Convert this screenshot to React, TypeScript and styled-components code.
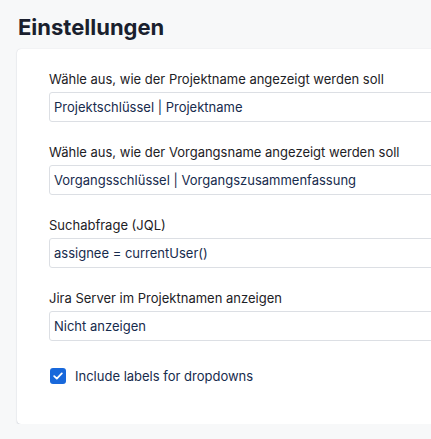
import React from "react";
import styled, { createGlobalStyle } from "styled-components";

const GlobalStyle = createGlobalStyle`
  html, body {
    margin: 0;
    padding: 0;
    background: #f7f8f9;
    overflow: hidden;
  }
  body {
    font-family: Inter, "Noto Sans", sans-serif;
    color: #1d2125;
  }
`;

const Page = styled.div`
  width: 480px;
  padding: 14px 0 0 18px;
  box-sizing: border-box;
`;

const Title = styled.h1`
  margin: 0 0 8px 0;
  font-size: 22px;
  line-height: 27px;
  font-weight: 700;
  color: #1a1f2e;
`;

const Card = styled.div`
  margin-left: -1px;
  background: #ffffff;
  border-radius: 4px;
  box-shadow: 0 1px 2px rgba(9, 30, 66, 0.12), 0 0 1px rgba(9, 30, 66, 0.18);
  padding: 22px 24px 40px 32px;
  display: flex;
  flex-direction: column;
`;

const Field = styled.div`
  display: flex;
  flex-direction: column;
  gap: 5px;
  margin-bottom: 22px;
`;

const Label = styled.label`
  font-size: 13px;
  line-height: 16px;
  color: #1d2125;
`;

const Select = styled.div`
  height: 30px;
  box-sizing: border-box;
  border: 1px solid #dcdfe4;
  border-radius: 3px;
  padding: 0 4px;
  display: flex;
  align-items: center;
  font-size: 13px;
  color: #172b4d;
  background: #ffffff;
`;

const CheckRow = styled.label`
  display: flex;
  align-items: center;
  gap: 9px;
  margin-top: 5px;
  padding-left: 1px;
  font-size: 13px;
  color: #172b4d;
`;

const Box = styled.span`
  width: 16px;
  height: 16px;
  border-radius: 3px;
  background: #1868db;
  display: flex;
  align-items: center;
  justify-content: center;
`;

const fields = [
  {
    label: "Wähle aus, wie der Projektname angezeigt werden soll",
    value: "Projektschlüssel | Projektname",
  },
  {
    label: "Wähle aus, wie der Vorgangsname angezeigt werden soll",
    value: "Vorgangsschlüssel | Vorgangszusammenfassung",
  },
  { label: "Suchabfrage (JQL)", value: "assignee = currentUser()" },
  { label: "Jira Server im Projektnamen anzeigen", value: "Nicht anzeigen" },
];

export default function App() {
  return (
    <>
      <GlobalStyle />
      <Page>
        <Title>Einstellungen</Title>
        <Card>
          {fields.map((f) => (
            <Field key={f.label}>
              <Label>{f.label}</Label>
              <Select>{f.value}</Select>
            </Field>
          ))}
          <CheckRow>
            <Box>
              <svg width="10" height="8" viewBox="0 0 10 8" fill="none">
                <path
                  d="M1.2 4.2 L3.8 6.6 L8.8 1.4"
                  stroke="#fff"
                  strokeWidth="1.8"
                  strokeLinecap="round"
                  strokeLinejoin="round"
                />
              </svg>
            </Box>
            Include labels for dropdowns
          </CheckRow>
        </Card>
      </Page>
    </>
  );
}
